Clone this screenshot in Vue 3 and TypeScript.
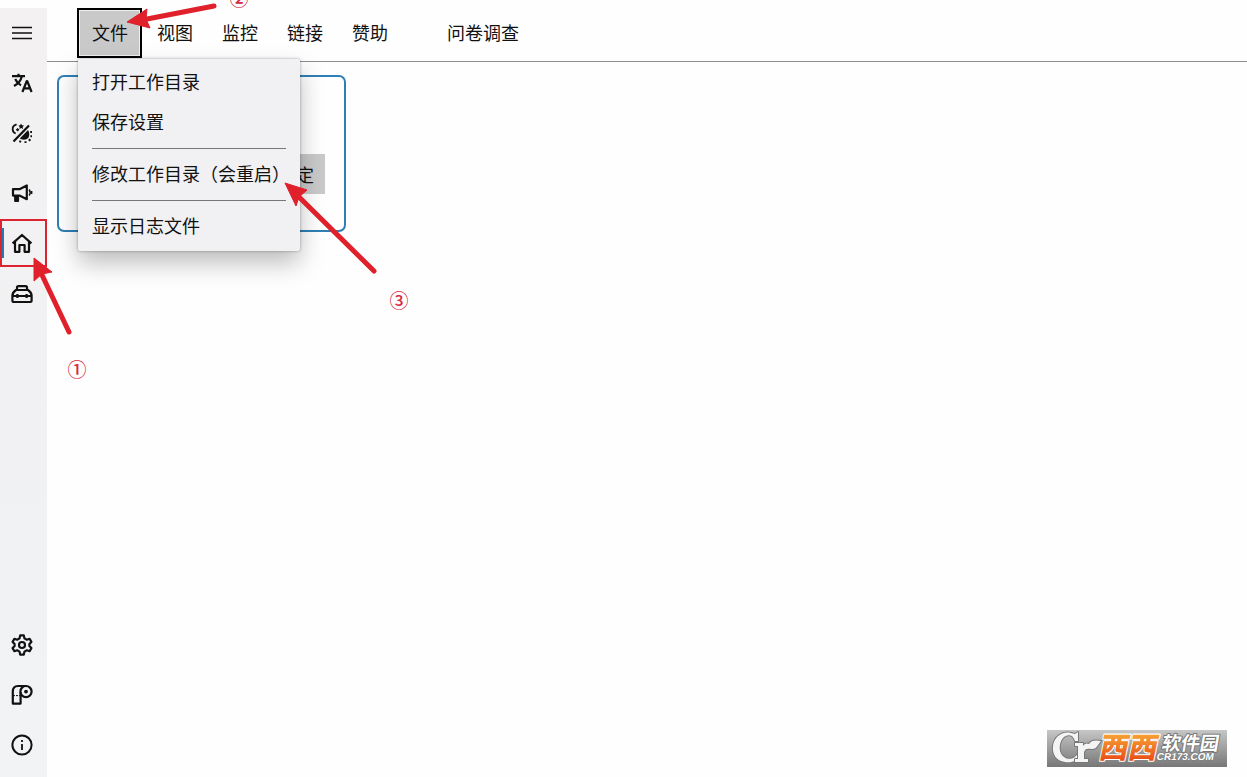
<script setup lang="ts">
import { ref } from 'vue'

interface NavItem {
  id: string
  label: string
}

const topNav: NavItem[] = [
  { id: 'menu', label: '菜单' },
  { id: 'lang', label: '语言' },
  { id: 'theme', label: '主题' },
  { id: 'notice', label: '公告' },
  { id: 'home', label: '主页' },
  { id: 'tools', label: '工具箱' },
]
const bottomNav: NavItem[] = [
  { id: 'settings', label: '设置' },
  { id: 'log', label: '日志' },
  { id: 'about', label: '关于' },
]
const navGroups = [topNav, bottomNav]
const current = ref('home')

const menus = ['文件', '视图', '监控', '链接', '赞助', '问卷调查']
const openMenu = ref('文件')
const fileGroups: string[][] = [
  ['打开工作目录', '保存设置'],
  ['修改工作目录（会重启）'],
  ['显示日志文件'],
]
</script>

<template>
  <div class="app">
    <aside class="sidebar">
      <nav v-for="(group, g) in navGroups" :key="g" class="nav">
        <button
          v-for="item in group"
          :key="item.id"
          type="button"
          class="nav-item"
          :class="[item.id, { active: current === item.id }]"
          :aria-label="item.label"
          @click="current = item.id"
        >
          <svg class="icon" viewBox="1 1 22 22" aria-hidden="true">
            <path v-if="item.id === 'menu'" d="M2 6.5H22M2 12H22M2 17.5H22" stroke-width="1.5" />
            <g v-else-if="item.id === 'lang'" stroke-width="2.2">
              <path d="M2 5.2H15M8.5 2.8V5M4 15C8 13 10.8 9.5 11.8 5.5M5.2 8C6.5 11 8.5 13 11 14.4" />
              <path d="M12.4 21L16.8 10H17.2L21.6 21M14 17.4H20.2" />
            </g>
            <g v-else-if="item.id === 'theme'">
              <path d="M3.5 20.5L19 4.5" stroke-width="2.2" />
              <path d="M6.6 3.4C3.8 4.2 2.4 6 2.7 8.5C2.8 10.3 4 11.9 5.7 12.5" stroke-width="1.8" />
              <path class="solid" d="M11 2.6L12 4.3L14 4.5L12.7 6L13 8L11.2 7.1L9.4 8L9.7 6L8.4 4.5L10.2 4.3ZM7.6 7L9.4 8.8L7.6 10.6L5.8 8.8Z" />
              <path class="solid" d="M18 9C20 12 19.6 16.5 17 18C14.5 19.2 11.5 18.8 9.8 17.6Z" />
              <path d="M20.2 11H22M20.4 15.2H22M18.8 18.2L20.4 19.8M15.5 20.2V22M10.6 19.6L9.8 21.4" stroke-width="2" />
            </g>
            <g v-else-if="item.id === 'notice'" stroke-width="2.2">
              <path d="M3 8.2H9.5L16.8 4.4V18.2L9.5 14.6H3Z" />
              <path d="M5.2 15V20H8V15" class="thick" />
              <path d="M19.2 8.5C20.2 10 20.2 13 19.2 14.5M21.6 10V13" stroke-width="1.6" />
            </g>
            <path v-else-if="item.id === 'home'" stroke-width="2.2" d="M2.6 12.4L12 4L21.4 12.4M5 10.8V20.8H9.4V14H14.6V20.8H19V10.8" />
            <g v-else-if="item.id === 'tools'" stroke-width="2.2">
              <path d="M7 8V5.6Q7 4.2 8.4 4.2H15.6Q17 4.2 17 5.6V8" />
              <path d="M6 8H18Q21.6 10.5 21.6 13.5V18.6Q21.6 20 20.2 20H3.8Q2.4 20 2.4 18.6V13.5Q2.4 10.5 6 8ZM2.4 14H21.6M7.4 12V16M16.6 12V16" />
            </g>
            <g v-else-if="item.id === 'settings'" stroke-width="2.2">
              <path d="M10.2 2.4H13.8L14.5 5.4L16.8 6.7L19.6 5.8L21.4 8.9L19.4 11V13L21.4 15.1L19.6 18.2L16.8 17.3L14.5 18.6L13.8 21.6H10.2L9.5 18.6L7.2 17.3L4.4 18.2L2.6 15.1L4.6 13V11L2.6 8.9L4.4 5.8L7.2 6.7L9.5 5.4Z" />
              <circle cx="12" cy="12" r="3" />
            </g>
            <g v-else-if="item.id === 'log'">
              <path stroke-width="2.2" d="M16 3H8C4.5 3 2.8 5 2.8 8.5V20.6H10.6V9" />
              <circle cx="16" cy="8.6" r="5.6" stroke-width="2.2" />
              <path d="M3 12.6H10" stroke-width="1" stroke-dasharray="2 1" />
              <circle class="solid" cx="16" cy="8.6" r="1.9" />
            </g>
            <g v-else>
              <circle cx="12" cy="12" r="9.6" stroke-width="2" />
              <path d="M12 11V17M12 7V9" stroke-width="1.8" />
            </g>
          </svg>
        </button>
      </nav>
    </aside>

    <div class="main">
      <header class="menubar">
        <div v-for="name in menus" :key="name" class="menu">
          <button
            type="button"
            class="menu-button"
            :class="{ open: openMenu === name }"
            @click="openMenu = openMenu === name ? '' : name"
          >{{ name }}</button>
          <div v-if="name === '文件' && openMenu === name" class="dropdown">
            <div v-for="(group, i) in fileGroups" :key="i" class="group">
              <button v-for="entry in group" :key="entry" type="button" class="entry">{{ entry }}</button>
            </div>
          </div>
        </div>
      </header>
      <main class="content">
        <section class="card">
          <button type="button" class="confirm">确定</button>
        </section>
      </main>
    </div>

    <svg class="notes" width="420" height="400" aria-hidden="true">
      <g class="shafts">
        <path d="M214 6L142 20" />
        <path d="M69 332L42 275" />
        <path d="M374 271L299 197" />
      </g>
      <path class="head" d="M127 22L147 9L146 19L150 28Z" />
      <path class="head" d="M34 258L52 272L42 274L34 281Z" />
      <path class="head" d="M285 183L307 190L299 197L296 206Z" />
      <text x="77" y="377">①</text>
      <text x="239" y="6">②</text>
      <text x="399" y="308">③</text>
    </svg>

    <svg class="brand" width="180" height="37" viewBox="0 0 180 37" role="img" aria-label="西西软件园">
      <defs>
        <linearGradient id="plate" x1="0" y1="0" x2="0" y2="1">
          <stop offset="0" stop-color="#c6c6c6" />
          <stop offset="1" stop-color="#777" />
        </linearGradient>
        <linearGradient id="flame" x1="0" y1="0" x2="0" y2="1">
          <stop offset="0.2" stop-color="#f8a735" />
          <stop offset="1" stop-color="#e63c10" />
        </linearGradient>
      </defs>
      <rect width="180" height="37" fill="url(#plate)" />
      <g class="mark-edge">
        <path d="M31 2V11H28C26 4 20 4 16 8C11 14 12 24 17 27C22 31 29 28 31 23L33 24C31 31 25 33 18 32C9 31 5 24 6 16C7 7 15 1 24 3L28 4Z" />
        <path d="M28 13H36V16C38 13 40 13 42 14C44 10 49 10 54 11C51 14 50 20 44 19C40 18 38 19 37 22V29H41V32H28V29H31V16H28Z" />
      </g>
      <g transform="translate(51 28) skewX(-12)">
        <text class="xi" x="0" y="0">西西</text>
      </g>
      <g transform="translate(114 20) skewX(-10)">
        <text class="soft" x="0" y="0">软件园</text>
        <text class="site" x="-3" y="10">CR173.COM</text>
      </g>
    </svg>
  </div>
</template>

<style>
body {
  margin: 0;
  background: #fefefe;
}
</style>

<style scoped>
.app {
  display: flex;
  box-sizing: border-box;
  min-height: 100vh;
  padding-top: 8px;
  overflow: hidden;
  color: #111;
  font: 18px/26px "Noto Sans CJK SC", sans-serif;
}
button {
  margin: 0;
  padding: 0;
  border: 0;
  background: none;
  color: inherit;
  font: inherit;
  white-space: nowrap;
}
.sidebar {
  display: flex;
  flex: none;
  flex-direction: column;
  justify-content: space-between;
  box-sizing: border-box;
  width: 47px;
  padding-bottom: 7px;
  background: linear-gradient(#f3f1f2, #f1f1f3 50%, #f1f3f5);
}
.nav {
  display: flex;
  flex-direction: column;
}
.nav-item {
  display: flex;
  align-items: center;
  box-sizing: border-box;
  height: 50px;
  padding-left: 11px;
}
.notice {
  margin-top: 10px;
}
.home {
  height: 48px;
  margin: 1px 0 2px;
}
.active {
  padding-left: 0;
  border: 2px solid #dc2430;
}
.active::before {
  width: 2px;
  height: 30px;
  margin-right: 7px;
  background: #2878b4;
  content: "";
}
.icon {
  flex: none;
  width: 22px;
  height: 22px;
  fill: none;
  stroke: #111;
  stroke-linejoin: round;
}
.solid,
.thick {
  fill: #111;
}
.solid {
  stroke: none;
}
.main {
  flex: 1;
  min-width: 0;
}
.menubar {
  display: flex;
  height: 53px;
  padding-left: 30px;
  border-bottom: 1px solid #8c8c8c;
}
.menu {
  position: relative;
}
.menu:last-child {
  margin-left: 30px;
}
.menu-button {
  box-sizing: border-box;
  height: 50px;
  padding: 0 14px 2px 15px;
}
.open {
  padding: 0 12px 2px 13px;
  border: 2px solid #000;
  background: #c9c9c9;
  box-shadow: inset 0 0 0 1px #eee;
}
.dropdown {
  position: absolute;
  z-index: 2;
  top: 51px;
  left: 1px;
  box-sizing: border-box;
  width: 222px;
  padding: 3px 14px 5px;
  border-radius: 2px;
  background: #f1f0f2;
  box-shadow: 0 0 3px rgba(0, 0, 0, 0.35), 0 12px 24px rgba(0, 0, 0, 0.26);
}
.group + .group {
  margin-top: 6px;
  padding-top: 5px;
  border-top: 1px solid #777;
}
.entry {
  display: block;
  width: 100%;
  height: 40px;
  padding-bottom: 2px;
  text-align: left;
}
.content {
  padding: 13px 10px;
}
.card {
  display: flex;
  align-items: center;
  justify-content: flex-end;
  box-sizing: border-box;
  width: 289px;
  height: 157px;
  padding: 40px 19px 0 0;
  border: 2px solid #2e7fb5;
  border-radius: 7px;
}
.confirm {
  height: 40px;
  padding: 0 11px;
  background: #c9c9c9;
}
.notes {
  position: absolute;
  z-index: 3;
  top: 0;
  left: 0;
  pointer-events: none;
}
.notes text {
  fill: #d8283c;
  font-size: 19px;
  font-weight: 500;
  text-anchor: middle;
}
.shafts {
  stroke: #e0202a;
  stroke-width: 5;
  stroke-linecap: round;
}
.head {
  fill: #e0202a;
  stroke: #e0202a;
}
.brand {
  position: absolute;
  right: 20px;
  bottom: 10px;
}
.brand text {
  paint-order: stroke;
  stroke-linejoin: round;
}
.mark-edge {
  fill: #f4f4f4;
  stroke: #777;
  stroke-width: 2px;
  stroke-linejoin: round;
  paint-order: stroke;
}
.xi {
  fill: url(#flame);
  stroke: #fff;
  stroke-width: 2px;
  font-size: 29px;
  font-weight: 900;
}
.soft {
  fill: #fff;
  stroke: #777;
  stroke-width: 2px;
  font-size: 19px;
  font-weight: 700;
}
.site {
  fill: #fff;
  stroke: #777;
  stroke-width: 1px;
  font: 700 10px "Liberation Sans", sans-serif;
}
</style>
